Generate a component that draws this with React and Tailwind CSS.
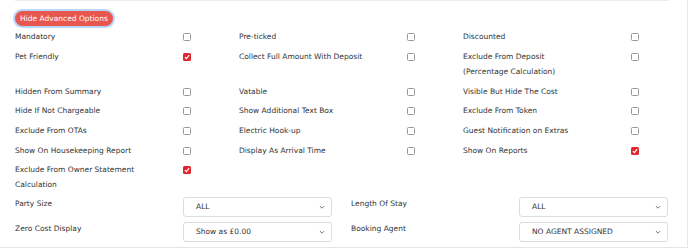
import React from 'react';

const rows = [
  [
    { label: 'Mandatory' },
    { label: 'Pre-ticked' },
    { label: 'Discounted' },
  ],
  [
    { label: 'Pet Friendly', checked: true },
    { label: 'Collect Full Amount With Deposit' },
    { label: 'Exclude From Deposit (Percentage Calculation)' },
  ],
  [
    { label: 'Hidden From Summary' },
    { label: 'Vatable' },
    { label: 'Visible But Hide The Cost' },
  ],
  [
    { label: 'Hide If Not Chargeable' },
    { label: 'Show Additional Text Box' },
    { label: 'Exclude From Token' },
  ],
  [
    { label: 'Exclude From OTAs' },
    { label: 'Electric Hook-up' },
    { label: 'Guest Notification on Extras' },
  ],
  [
    { label: 'Show On Housekeeping Report' },
    { label: 'Display As Arrival Time' },
    { label: 'Show On Reports', checked: true },
  ],
  [{ label: 'Exclude From Owner Statement Calculation', checked: true }],
];

const Check = ({ checked }) =>
  checked ? (
    <span className="mt-[4px] flex h-[8px] w-[8px] shrink-0 items-center justify-center rounded-[1.5px] bg-[#e0262f]">
      <svg viewBox="0 0 10 10" className="h-[6px] w-[6px]">
        <path d="M1.5 5.2 L4 7.6 L8.6 2" fill="none" stroke="white" strokeWidth="2" />
      </svg>
    </span>
  ) : (
    <span className="mt-[4px] block h-[8px] w-[8px] shrink-0 rounded-[1.5px] border border-[#9a9a9a] bg-white" />
  );

const Option = ({ label, checked }) => (
  <div className="flex items-start">
    <div className="w-[126px] shrink-0 leading-[15px]">{label}</div>
    <div className="w-[42px] shrink-0" />
    <Check checked={checked} />
  </div>
);

const Select = ({ value }) => (
  <div className="flex h-[20px] w-[149px] items-center justify-between rounded-[3px] border border-[#dcdcdc] bg-white pl-[12px] pr-[6px]">
    <span>{value}</span>
    <svg viewBox="0 0 10 10" className="h-[6px] w-[6px]">
      <path d="M1.5 3.5 L5 7 L8.5 3.5" fill="none" stroke="#555" strokeWidth="1.4" />
    </svg>
  </div>
);

export default function App() {
  return (
    <div
      className="h-[248px] w-[688px] border-r border-b border-[#e6e6e6] bg-white text-[7.5px] text-[#333]"
      style={{ fontFamily: '"DejaVu Sans", sans-serif' }}
    >
      <div className="ml-[15px] w-[654px] border-t border-[#ececec] pt-[10px]">
        <button className="rounded-full bg-[#e8574f] px-[5px] py-[1.5px] leading-[12px] text-white ring-2 ring-[#b8d6fa]">
          Hide Advanced Options
        </button>
        <div className="mt-[3px] flex flex-col gap-[4.6px]">
          <div className="mb-[0.6px] grid w-[672px] grid-cols-3">
            {rows[0].map((o) => (
              <Option key={o.label} {...o} />
            ))}
          </div>
          {rows.slice(1).map((row, i) => (
            <div key={i} className="grid w-[672px] grid-cols-3">
              {row.map((o) => (
                <Option key={o.label} {...o} />
              ))}
            </div>
          ))}
        </div>
        <div className="mt-[4.5px] flex flex-col gap-[5px]">
          <div className="grid w-[672px] grid-cols-2">
            <div className="flex items-start">
              <div className="w-[168px] pt-[1px]">Party Size</div>
              <Select value="ALL" />
            </div>
            <div className="flex items-start">
              <div className="w-[168px] pt-[1px]">Length Of Stay</div>
              <Select value="ALL" />
            </div>
          </div>
          <div className="grid w-[672px] grid-cols-2">
            <div className="flex items-start">
              <div className="w-[168px] pt-[1px]">Zero Cost Display</div>
              <Select value="Show as £0.00" />
            </div>
            <div className="flex items-start">
              <div className="w-[168px] pt-[1px]">Booking Agent</div>
              <Select value="NO AGENT ASSIGNED" />
            </div>
          </div>
        </div>
      </div>
    </div>
  );
}
